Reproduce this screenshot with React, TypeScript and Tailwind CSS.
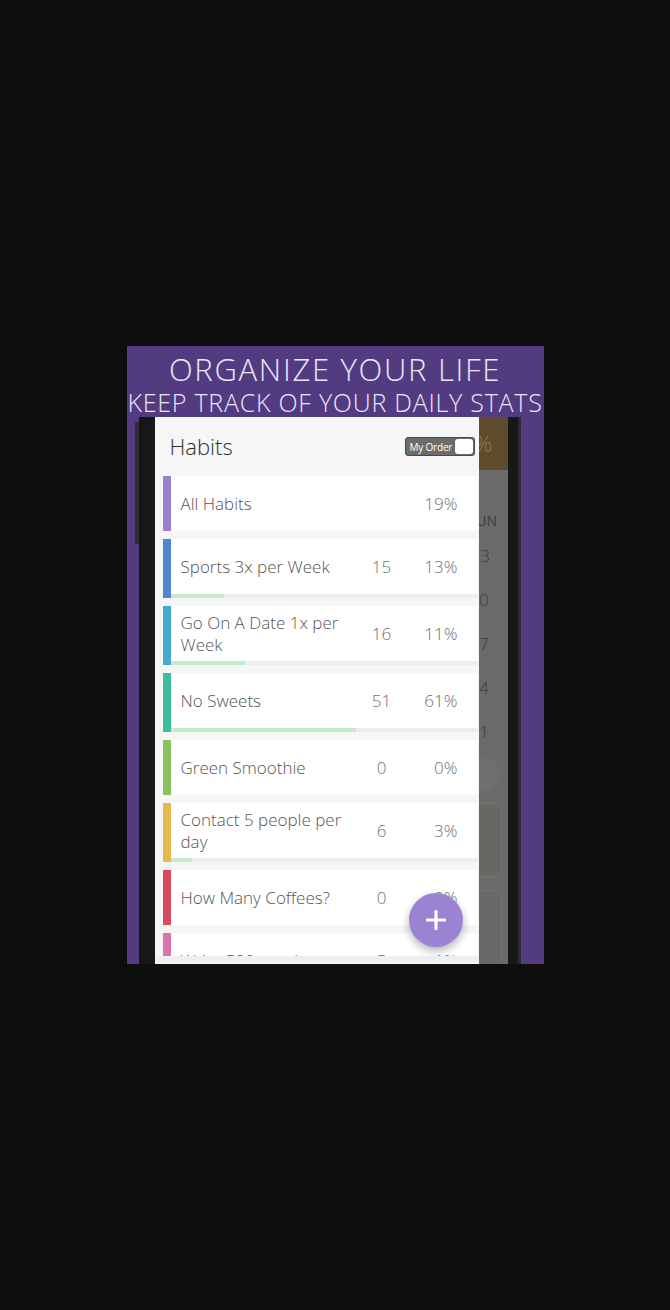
import { Plus } from 'lucide-react';

type Habit = {
    name: string;
    color: string;
    count?: string;
    percent: string;
    progress?: number;
};

const Habits: Habit[] = [
    { name: 'All Habits', color: '#9b80d4', percent: '19%' },
    { name: 'Sports 3x per Week', color: '#4f87d2', count: '15', percent: '13%', progress: 53 },
    { name: 'Go On A Date 1x per Week', color: '#41acd0', count: '16', percent: '11%', progress: 74 },
    { name: 'No Sweets', color: '#3dbd9c', count: '51', percent: '61%', progress: 185 },
    { name: 'Green Smoothie', color: '#8dbf63', count: '0', percent: '0%' },
    { name: 'Contact 5 people per day', color: '#e5b94f', count: '6', percent: '3%', progress: 21 },
    { name: 'How Many Coffees?', color: '#d84a5e', count: '0', percent: '0%' },
    { name: 'Write 500 words', color: '#d675a9', count: '5', percent: '1%' },
];

const CalendarDigits = ['10', '17', '24', '31'];

const HabitRow = ({ habit }: { habit: Habit }) => (
    <li className="flex shrink-0">
        <div className="w-[8px] shrink-0" style={{ backgroundColor: habit.color }} />
        <div className="flex flex-1 flex-col bg-white">
            <div className="flex h-[55px] items-center pl-[10px] text-[17px] font-light text-[#555]">
                <p className="flex-1 leading-[22px]">{habit.name}</p>
                <p className="mr-[6px] w-[40px] text-center text-[#6f6f6f]">{habit.count}</p>
                <p className="box-content w-[50px] pr-[20px] text-right text-[#6f6f6f]">
                    {habit.percent}
                </p>
            </div>
            {habit.progress !== undefined && (
                <div className="h-[4px] bg-[#ededed]">
                    <div className="h-full bg-[#c7ebc7]" style={{ width: habit.progress }} />
                </div>
            )}
        </div>
    </li>
);

const App = () => {
    return (
        <div
            className="flex h-[1310px] w-[670px] items-center justify-center bg-[#0e0e0e]"
            style={{ fontFamily: '"Open Sans", "Noto Sans", sans-serif' }}
        >
            <div className="flex h-[618px] w-[417px] flex-col overflow-hidden bg-[#533b82]">
                <div className="flex h-[71px] shrink-0 flex-col items-center font-light text-[#ece6f6]">
                    <h1 className="mt-[7px] whitespace-nowrap text-[31px] leading-[32px] tracking-[1.7px]">
                        ORGANIZE YOUR LIFE
                    </h1>
                    <h2 className="mt-[3px] whitespace-nowrap text-[25px] leading-[28px] tracking-[0.75px]">
                        KEEP TRACK OF YOUR DAILY STATS
                    </h2>
                </div>

                <div className="ml-[8px] flex min-h-0 w-[386px] flex-1 overflow-hidden">
                    {/* left phone edge */}
                    <div className="flex w-[20px]">
                        <div className="mt-[5px] mb-[420px] w-[4px] bg-[#2e2e2e]" />
                        <div className="flex-1 bg-[#171717]" />
                    </div>

                    <div className="flex w-[353px]">
                        {/* habits panel */}
                        <div className="relative flex w-[324px] flex-col bg-[#f6f6f6]">
                            <div className="flex h-[59px] shrink-0 items-center justify-between pl-[15px] pr-[4px]">
                                <h3 className="text-[22px] font-light text-[#2e2e2e]">Habits</h3>
                                <div className="flex h-[19px] w-[70px] items-center rounded-[3px] border border-[#4a4a4a] bg-[#6c6c6c] pl-[4px] pr-[1px]">
                                    <span className="flex-1 text-[10px] leading-none tracking-[-0.2px] text-white">
                                        My Order
                                    </span>
                                    <span className="h-[15px] w-[18px] rounded-[3px] bg-white" />
                                </div>
                            </div>

                            <ul className="flex h-[480px] shrink-0 flex-col gap-[8px] overflow-hidden pl-[8px] pr-[1px]">
                                {Habits.map(habit => (
                                    <HabitRow key={habit.name} habit={habit} />
                                ))}
                            </ul>
                            <div className="h-[7px] shrink-0 bg-[#efefef]" />

                            <button className="absolute left-[254px] top-[476px] flex h-[54px] w-[54px] items-center justify-center rounded-full bg-[#9c82d3] text-white shadow-[0_4px_8px_rgba(0,0,0,0.3)]">
                                <Plus size={30} strokeWidth={2.5} />
                            </button>
                        </div>

                        {/* dimmed calendar behind */}
                        <div className="flex flex-1 flex-col overflow-hidden bg-[#6a6a6a] text-[#3c3c3c]">
                            <div className="flex h-[53px] shrink-0 items-center bg-[#5e4c2d]">
                                <span className="-ml-[4px] text-[22px] font-light text-[#8a7a5a]">%</span>
                            </div>
                            <span className="-ml-[10px] mt-[42px] text-[14px] leading-[18px]">SUN</span>
                            <span className="-ml-[8px] mt-[16px] text-[17px] font-light leading-[20px]">13</span>
                            <div className="mt-[24px] flex flex-col gap-[24px]">
                                {CalendarDigits.map(d => (
                                    <span key={d} className="-ml-[9px] text-[17px] font-light leading-[20px]">
                                        {d}
                                    </span>
                                ))}
                            </div>
                            <div className="-ml-[12px] mt-[15px] h-[34px] w-[33px] shrink-0 rounded-full bg-[#6f6f6f]" />
                            <div className="-ml-[12px] mt-[12px] h-[74px] w-[35px] shrink-0 rounded-[8px] border border-[#727272] bg-[#686763]" />
                            <div className="-ml-[12px] mt-[13px] h-[80px] w-[35px] shrink-0 rounded-[8px] border border-[#727272] bg-[#686868]" />
                        </div>
                    </div>

                    {/* right phone edge */}
                    <div className="flex w-[13px]">
                        <div className="flex-1 bg-[#171717]" />
                        <div className="w-[3px] bg-[#2a2a2a]" />
                    </div>
                </div>
            </div>
        </div>
    );
};

export default App;
